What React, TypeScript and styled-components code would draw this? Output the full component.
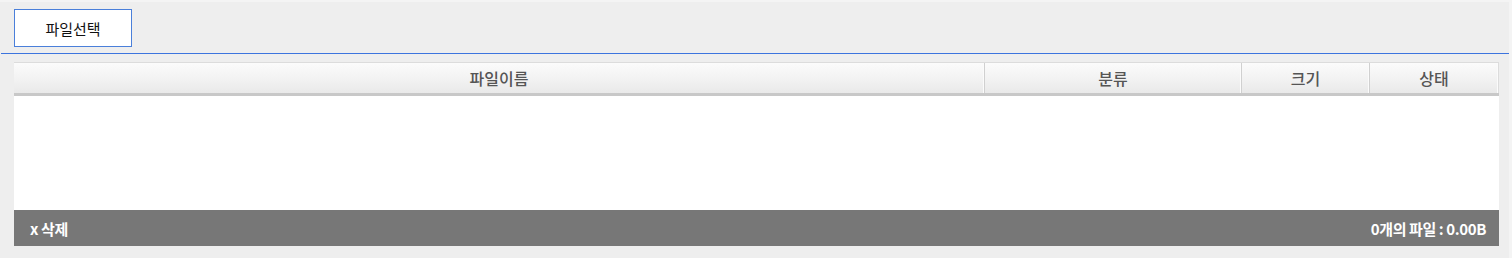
import React from "react";
import styled, { createGlobalStyle } from "styled-components";

const Global = createGlobalStyle`
  html, body { margin: 0; padding: 0; background: #eeeeee; }
  body { font-family: "Noto Sans CJK KR", "Noto Sans", sans-serif; }
`;

const Page = styled.div`
  width: 1512px;
  height: 258px;
  box-sizing: border-box;
  background: #eeeeee;
  border-top: 2px solid #f4f4f4;
  border-right: 3px solid #f4f4f4;
  display: flex;
  flex-direction: column;
`;

const Toolbar = styled.div`
  height: 52px;
  box-sizing: border-box;
  padding: 7px 0 0 13px;
  border-bottom: 1px solid #3c74de;
  margin-left: 1px;
`;

const SelectButton = styled.button`
  width: 118px;
  height: 38px;
  background: #ffffff;
  border: 1px solid #4a7fda;
  font-family: "Noto Sans CJK KR", sans-serif;
  font-size: 15px;
  color: #111;
  padding: 0;
  cursor: pointer;
`;

const Table = styled.div`
  margin: 8px 0 0 14px;
  width: 1485px;
  display: flex;
  flex-direction: column;
`;

const Header = styled.div`
  display: grid;
  grid-template-columns: 971px 257px 128px 129px;
  height: 34px;
  box-sizing: border-box;
  border-top: 1px solid #dcdcdc;
  border-bottom: 3px solid #c8c8c8;
  background: linear-gradient(#fbfbfb, #f3f3f3 50%, #e9e9e9);
`;

const HeadCell = styled.div<{ $last?: boolean }>`
  display: flex;
  align-items: center;
  justify-content: center;
  font-size: 16px;
  font-weight: 500;
  color: #555;
  border-right: ${(p) => (p.$last ? "1px solid #dcdcdc" : "1px solid #d0d0d0")};
  box-shadow: inset -1px 0 0 #fbfbfb;
`;

const Body = styled.div`
  height: 114px;
  background: #ffffff;
`;

const Footer = styled.div`
  height: 36px;
  background: #777777;
  display: flex;
  align-items: center;
  justify-content: space-between;
  padding: 0 13px 0 16px;
  color: #fff;
  font-size: 15px;
  font-weight: 700;
`;

const FooterText = styled.span`
  letter-spacing: -0.4px;
`;

export default function App() {
  return (
    <>
      <Global />
      <Page>
        <Toolbar>
          <SelectButton>파일선택</SelectButton>
        </Toolbar>
        <Table>
          <Header>
            <HeadCell>파일이름</HeadCell>
            <HeadCell>분류</HeadCell>
            <HeadCell>크기</HeadCell>
            <HeadCell $last>상태</HeadCell>
          </Header>
          <Body />
          <Footer>
            <FooterText>x 삭제</FooterText>
            <FooterText>0개의 파일 : 0.00B</FooterText>
          </Footer>
        </Table>
      </Page>
    </>
  );
}
